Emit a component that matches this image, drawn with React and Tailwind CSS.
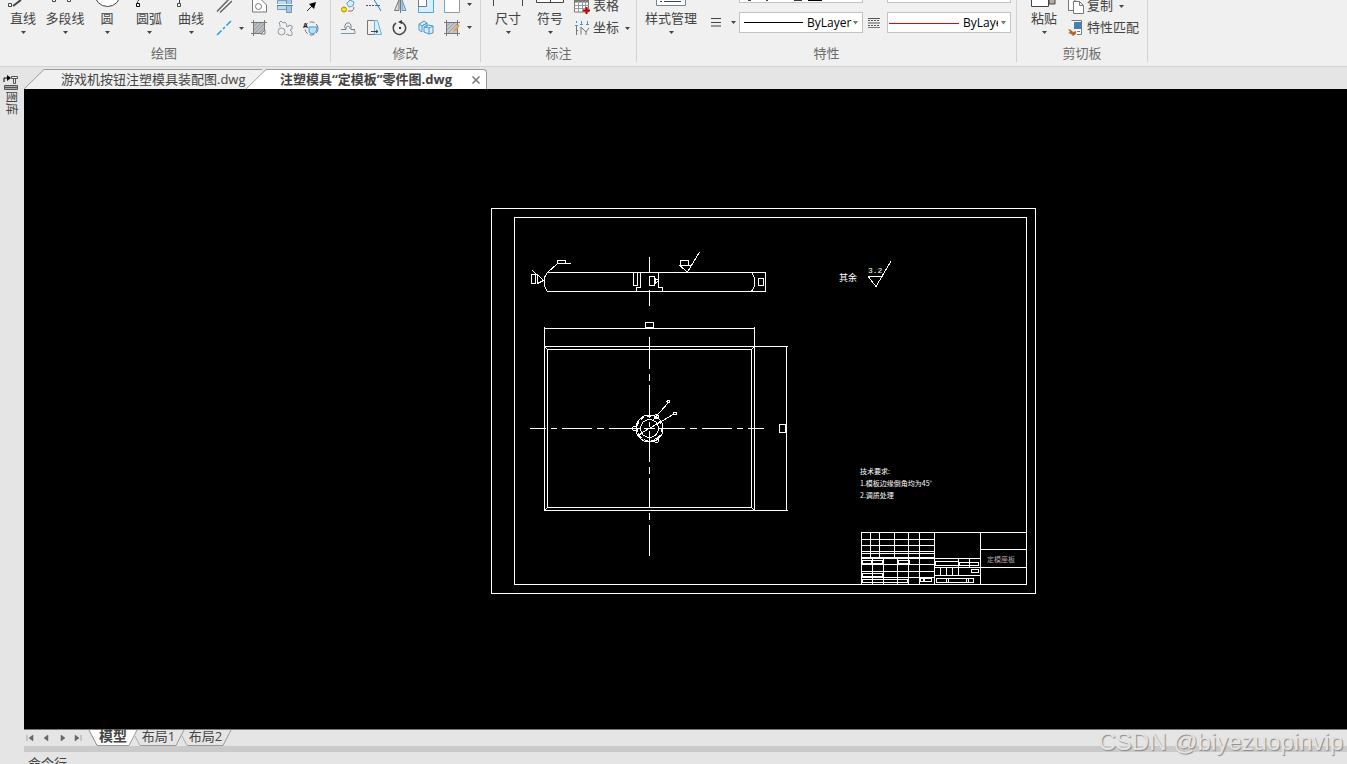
import { useState } from 'react'

const layoutTabs = ['模型', '布局1', '布局2']

function Caret({ className = 'text-[#444]' }) {
  return (
    <svg viewBox="0 0 5 3" className={`h-[3px] w-[5px] shrink-0 ${className}`} aria-hidden="true">
      <path d="M0 0h5L2.500 3z" fill="currentColor" />
    </svg>
  )
}

function Group({ title, className, children }) {
  return (
    <section className={`flex h-[62px] shrink-0 flex-col justify-end border-r border-[#d2d2d2] ${className}`}>
      <div className="flex h-9 items-end">{children}</div>
      <h2 className="mt-2 text-center text-[13px] leading-[18px] text-[#6a6a6a]">{title}</h2>
    </section>
  )
}

function BigButton({ label, wide, children }) {
  return (
    <button className={`flex shrink-0 flex-col items-center pb-0.5 ${wide ? 'w-[60px]' : 'w-[42px]'}`}>
      <svg viewBox="0 0 32 10" className="h-2.5 w-8" fill="none" stroke="#444" strokeWidth="1" aria-hidden="true">
        {children}
      </svg>
      <span className="mb-[5px] whitespace-nowrap text-[13px] leading-4 text-[#444]">{label}</span>
      <Caret />
    </button>
  )
}

function Icon({ children }) {
  return (
    <svg viewBox="0 0 16 16" className="size-4 shrink-0" fill="none" stroke="#777" strokeWidth="1" aria-hidden="true">
      {children}
    </svg>
  )
}

function Tool({ title, children }) {
  return (
    <button title={title} aria-label={title} className="flex w-[26px] justify-center">
      <Icon>{children}</Icon>
    </button>
  )
}

function TextTool({ label, caret, children }) {
  return (
    <button className="flex h-4 items-center text-[13px] leading-4 text-[#444]">
      <Icon>{children}</Icon>
      <span className="ml-[3px] whitespace-nowrap pb-0.5">{label}</span>
      {caret && <span className="ml-1.5"><Caret /></span>}
    </button>
  )
}

function Combo({ label, pad, children }) {
  return (
    <div className="relative h-[21px] w-[124px]">
      <select
        aria-label={label}
        className={`block h-[21px] w-full appearance-none border border-[#c3c3c3] bg-white text-[12px] leading-4 text-black ${pad}`}
      >
        <option>ByLayer</option>
        <option>ByBlock</option>
      </select>
      <svg viewBox="0 0 124 21" className="pointer-events-none absolute inset-0" aria-hidden="true">
        <path d="M114 9h5l-2.500 3.500z" fill="#777" />
        {children}
      </svg>
    </div>
  )
}

function DrawGroup() {
  return (
    <Group title="绘图" className="w-[331px] pl-0.5 pr-1">
      <div className="flex">
        <BigButton label="直线">
          <path d="M6 6 14 0" strokeWidth="2" />
          <path d="M1.500 3.500h3v3h-3z" fill="#fff" />
        </BigButton>
        <BigButton label="多段线">
          <path d="M3.500-1.500h3v3h-3zM18.500-1.500h3v3h-3z" fill="#fff" />
        </BigButton>
        <BigButton label="圆">
          <circle cx="16.500" cy="-6.500" r="13" fill="#fff" />
        </BigButton>
        <BigButton label="圆弧">
          <path d="M4.500 3Q4 1 6 0" />
          <path d="M3.500 3.500h3v3h-3z" fill="#fff" stroke="#000" />
        </BigButton>
        <BigButton label="曲线">
          <path d="M4.500 3V0" />
          <path d="M2.500 3.500h3v3h-3z" fill="#fff" />
        </BigButton>
      </div>
      <div className="ml-1 flex w-[30px] flex-col gap-[7px]">
        <button title="双线" aria-label="双线" className="w-4">
          <Icon><path d="M1 14.500 14 1M4 15.500 16 4" stroke="#666" strokeWidth="1.500" /></Icon>
        </button>
        <button title="构造线" aria-label="构造线" className="flex w-7 items-center justify-between">
          <Icon><path d="M1 15 5.500 10.500M7 9l2-2M10.500 5.500 15 1" stroke="#22a0dc" strokeWidth="1.500" /></Icon>
          <Caret />
        </button>
      </div>
      <div className="grid grid-cols-3 gap-y-[7px]">
        <Tool title="面域">
          <path d="M1.500 1v14h14V8L10 2.500" fill="#fff" />
          <circle cx="7.500" cy="9.500" r="3" />
        </Tool>
        <Tool title="轴">
          <path d="M.500 3.500h9v9h-9z" fill="#bcdcf4" stroke="#7b9cb8" />
          <path d="M9.500 1.500h5v14h-5z" fill="#9fc8ea" stroke="#8090a8" />
          <path d="M0 7.500h16" stroke="#fff" />
          <path d="M0 8.500h16" stroke="#4386bf" />
        </Tool>
        <Tool title="箭头">
          <path d="M4 14 9 9" stroke="#222" />
          <path d="m13 5-2 7-5-5z" fill="#000" stroke="none" />
        </Tool>
        <Tool title="填充">
          <path d="M2.500 2.500h11v11h-11z" fill="#b9bdc1" stroke="#75787b" />
          <path d="M0 2.500h16M2.500 0v16M0 13.500h10M13.500 0v10" stroke="#777" />
          <path d="M3 6l3-3M3 10l7-7M4 13l9-9M8 13l5-5" stroke="#999da1" />
          <path d="m10 14 4-4v4z" fill="#fff" />
        </Tool>
        <Tool title="零件">
          <path d="M3 7V5L2 3l2-2 2 2 2-1 2 3-1 1 2 1 1-2 3 1v3l-2 1 2 2v3l-3 1-1-2-2 1" stroke="#8b98a4" />
          <circle cx="4.500" cy="11.500" r="3.500" stroke="#8b98a4" />
        </Tool>
        <Tool title="局部放大">
          <circle cx="8.500" cy="8.500" r="6.500" stroke="#778" strokeDasharray="5 2" />
          <path d="M6 7h8q0 6-5 7-3-1-3-3z" fill="#b7e1f8" stroke="#3e9bd0" />
          <text x="0" y="8" fontSize="7" fontWeight="700" fill="#222" stroke="none">A</text>
        </Tool>
      </div>
    </Group>
  )
}

function ModifyGroup() {
  return (
    <Group title="修改" className="w-[150px]">
      <div className="ml-1 grid grid-cols-5 gap-y-[7px]">
        <Tool title="复制">
          <circle cx="4" cy="12.500" r="2.500" fill="#ffe600" stroke="#aa8d00" />
          <path d="m7 6 3-3 4 2-1 4-4 1-2-3z" fill="#d5efff" stroke="#5aa0cf" />
          <path d="M8 14h4q2-1 2-4" stroke="#b56161" />
        </Tool>
        <Tool title="延伸">
          <path d="M0 8.500h10" stroke="#555" strokeDasharray="2 1" />
          <path d="m7 1 8 13M9 8.500h5" stroke="#247bb9" />
        </Tool>
        <Tool title="镜像">
          <path d="M7 3v10.500H2.500z" fill="#ddd" />
          <path d="M10 3v10.500h4z" fill="#a9d9f3" stroke="#6199bd" />
          <path d="M8.500 0v16" />
        </Tool>
        <Tool title="缩放">
          <path d="M.500 0v15.500h15V0z" fill="#d5f1fd" stroke="#50a6d5" />
          <path d="M.500 0v9.500h8V0z" fill="#fff" stroke="#707a85" />
        </Tool>
        <Tool title="阵列">
          <path d="M.500 0v15.500h15V0z" fill="#fff" stroke="#999" />
          <path d="M.500 0v15.500" stroke="#56b6ea" strokeDasharray="3 2" />
        </Tool>
        <Tool title="偏移">
          <path d="M1 9.500h5q-3-3 0-6 4-2 5 2v4h4" stroke="#737e89" />
          <path d="M1 13.500h14q1-3-2-4M6 9q0-3 2-3t2 3" stroke="#7c95a5" />
        </Tool>
        <Tool title="拉伸">
          <path d="M1.500.500h7v14h-7z" stroke="#777" />
          <path d="M8.500.500h3l4 14h-7z" fill="#d5f0fc" stroke="#70aed2" />
          <path d="M5 11.500h7l-2-1.500m2 1.500L10 13" stroke="#444" />
        </Tool>
        <Tool title="旋转">
          <path d="M4 3A6.200 6.200 0 1 0 8 2" stroke="#444" strokeWidth="1.500" />
          <path d="m6 2 4-2v4z" fill="#333" stroke="none" />
          <path d="M7 7h2v2H7z" fill="#333" stroke="none" />
        </Tool>
        <Tool title="三维">
          <path d="m1 4 5-3 3 2-5 3zM1 4v6l3 2V6M4 6l5-3v4M6 7l4-2 5 1v7l-4 1-5-2zM6 7l5 1 4-2M11 8v6" fill="#d2edfb" stroke="#4e9ac8" />
        </Tool>
        <Tool title="编辑填充">
          <path d="M2.500 2.500h11v11h-11z" fill="#c3c7cb" stroke="#777" />
          <path d="M0 2.500h16M2.500 0v16M13.500 0v16M0 13.500h16" stroke="#777" />
          <path d="M3 6l3-3M3 10l7-7M4 13l9-9" stroke="#999da1" />
          <path d="m10 11 5-6" stroke="#e9a13b" strokeWidth="2" />
        </Tool>
      </div>
      <div className="flex flex-col gap-5 pb-[7px] pl-0.5">
        <Caret />
        <Caret />
      </div>
    </Group>
  )
}

function AnnotateGroup() {
  return (
    <Group title="标注" className="w-[156px]">
      <div className="ml-1.5 flex">
        <BigButton label="尺寸">
          <path d="M1.500 0v6M30.500 0v6" />
        </BigButton>
        <BigButton label="符号">
          <path d="M2.500-2v4.500h27V-2M16.500-2v4.500" fill="#fff" />
        </BigButton>
      </div>
      <div className="ml-[3px] flex flex-col gap-1.5">
        <TextTool label="表格">
          <path d="M.500 0h14v14H.500z" fill="#fff" />
          <path d="M1 3h13" strokeWidth="3" />
          <path d="M.500 7.500h14M.500 10.500h14M4.500 3v11M8.500 3v11M11.500 3v11" stroke="#999" />
          <path d="M12.500 9v7M9 12.500h7" stroke="#c00000" strokeWidth="2" />
        </TextTool>
        <TextTool label="坐标" caret>
          <path d="M2.500 6v9M2 10.500h2M7 14.500V7l5 5 3-4M12 12v3" stroke="#777" />
          <path d="M2.500 1v2M7.500 1v3M13.500 1v3M6 4.500h3M12 4.500h3M1 5.500h3" stroke="#4b93d2" />
        </TextTool>
      </div>
    </Group>
  )
}

function PropertyGroup() {
  return (
    <Group title="特性" className="w-[380px]">
      <div className="ml-1">
        <BigButton label="样式管理" wide>
          <path d="M1.500-2v7.500h29V-2z" fill="#fff" stroke="#6d8798" />
          <path d="M5 1.500h2M9 1.500h17" />
        </BigButton>
      </div>
      <button title="线宽" aria-label="线宽" className="mb-[9px] ml-2.5 flex w-[25px] items-center justify-between">
        <svg viewBox="0 0 10 9" className="h-[9px] w-2.5" aria-hidden="true">
          <path d="M0 .500h10M0 4.500h10M0 8h10" stroke="#444" />
        </svg>
        <Caret />
      </button>
      <div className="mb-[3px] ml-[3px] flex flex-col gap-[9px]">
        <Combo label="颜色" pad="pl-[67px]">
          <path d="M9 18.500h3M27 18.500h2" stroke="#444" />
          <path d="M55 18.500h8" stroke="#334" />
          <path d="M69 18.500h14" stroke="#000" />
        </Combo>
        <Combo label="线宽" pad="pl-[67px]">
          <path d="M5 10.500h59" stroke="#000" />
        </Combo>
      </div>
      <svg viewBox="0 0 12 10" className="mb-2 ml-[5px] mr-[7px] h-2.5 w-3" aria-hidden="true">
        <path d="M0 .500h12M0 5h12" stroke="#555" />
        <path d="M0 2.500h12M0 7.500h12" stroke="#555" strokeDasharray="2 1" />
        <path d="M0 9.500h12" stroke="#777" />
      </svg>
      <div className="mb-[3px] flex flex-col gap-[9px]">
        <Combo label="图层" pad="pl-[75px] pr-3" />
        <Combo label="线型" pad="pl-[75px] pr-3">
          <path d="M2 11.500h70" stroke="#f00000" />
        </Combo>
      </div>
    </Group>
  )
}

function ClipboardGroup() {
  return (
    <Group title="剪切板" className="w-[131px]">
      <div className="ml-1.5">
        <BigButton label="粘贴">
          <path d="M3.500-2v8.500h17V-2z" fill="#fff" />
          <path d="M21-2h6v6h-6z" fill="#b9aba0" />
        </BigButton>
      </div>
      <div className="ml-[3px] flex flex-col gap-1.5">
        <TextTool label="复制" caret>
          <path d="M.500 0v12.500h5V3.500l4-3" fill="#fff" />
          <path d="M5.500 3.500h6l4 4v8h-10zM11.500 3.500v4h4" fill="#fff" />
        </TextTool>
        <TextTool label="特性匹配">
          <path d="M3.500.500h10v14H9" fill="#fff" />
          <path d="M6 2h7v7H6z" fill="#4281b5" stroke="none" />
          <path d="m0 9 3 1 2 2 3-1v3l-3 2-2-2-3-1 2-1z" fill="#b16a31" stroke="none" />
          <path d="M9 11.500h3" />
        </TextTool>
      </div>
    </Group>
  )
}

function FileTabs() {
  return (
    <nav className="flex h-[22px] items-end text-[13px] leading-4 text-[#444]">
      <svg viewBox="0 0 20 20" className="size-5 shrink-0" aria-hidden="true">
        <path d="M0 20 20 .500V20z" fill="#f0f0f0" />
        <path d="M0 20 20 .500" stroke="#999" />
      </svg>
      <button className="h-5 w-[218px] shrink-0 whitespace-nowrap border-t border-[#999] bg-[#f0f0f0] pb-0.5 pl-[17px] text-left">
        游戏机按钮注塑模具装配图.dwg
      </button>
      <svg viewBox="0 0 20 20" className="z-10 -ml-4 size-5 shrink-0" aria-hidden="true">
        <path d="M0 20 20 .500V20z" fill="#fff" />
        <path d="M0 20 20 .500" stroke="#999" />
      </svg>
      <div className="flex h-5 w-[221px] shrink-0 items-center rounded-tr-sm border-r border-t border-[#999] bg-white">
        <button className="flex-1 whitespace-nowrap pb-0.5 pl-3.5 text-left font-bold">注塑模具“定模板”零件图.dwg</button>
        <button aria-label="关闭" className="mr-1.5">
          <svg viewBox="0 0 8 8" className="size-2" aria-hidden="true">
            <path d="m.500.500 7 7m0-7-7 7" stroke="#777" strokeWidth="1.500" />
          </svg>
        </button>
      </div>
    </nav>
  )
}

function Sheet() {
  return (
    <svg
      viewBox="24 89 1323 640"
      className="h-full w-full font-['Noto_Sans_CJK_SC',sans-serif]"
      fill="none"
      stroke="#fff"
      shapeRendering="crispEdges"
    >
      {/* frame */}
      <path d="M491.500 208.500h544v385h-544zM514.500 217.500h512v367h-512z" />

      {/* side view */}
      <path d="M547 272.500h219M547 291.500h219M544.500 277v10M754.500 277v10M765.500 272v20" />
      <path d="m544.500 277.500 3-5M544.500 286.500l3 5M751.500 272.500l3 5M754.500 286.500l-3 5" />
      <path d="M649.500 257v16M649.500 290v16M758.500 278.500h5v7h-5z" />
      <path d="M633.500 272.500h4v13h-4zM640.500 272v15.500h-4v4M658.500 272v15.500h4v4" />
      <path d="M649.500 276.500h5v9h-5zM655.500 278.500l3 2-3 3z" />
      <path d="M531.500 274.500h4v9h-4zM532 270l5 5M537.500 274.500v9l6-3z" />
      <path d="m547.500 272.500 10-9M557.500 260.500h8v3h-8zM557 263.500h14" />
      <path d="M680.500 260.500h8v5h-8zM679 265.500h13M680 265.500l7 6.500M687.500 272l12-20" />

      {/* plan view */}
      <path d="M544.500 328.500h210M544.500 327v184M754.500 327v184M544 346.500h244M544 510.500h244" />
      <path d="M547.500 349.500h204v158h-204zM544.500 346.500l3 3M754.500 346.500l-3 3M544.500 510.500l3-3M754.500 510.500l-3-3" />
      <path d="M645.500 322.500h8v5h-8zM786.500 346v165M779.500 424.500h6v8h-6z" />
      <path d="M649.500 337v32M649.500 374v7M649.500 385v33M649.500 422v5M649.500 431v31M649.500 467v7M649.500 478v29M649.500 513v7M649.500 525v31" />
      <path d="M530 428.500h16M551 428.500h6M562 428.500h30M597 428.500h7M609 428.500h31M644 428.500h11M659 428.500h26M690 428.500h7M702 428.500h30M737 428.500h6M748 428.500h16" />
      <circle cx="649.500" cy="428.500" r="13.500" />
      <circle cx="649.500" cy="428.500" r="12.500" strokeDasharray="4 3" />
      <circle cx="649.500" cy="428.500" r="9" />
      <circle cx="634.500" cy="428.500" r="2" />
      <circle cx="656.500" cy="416.500" r="2" />
      <circle cx="656.500" cy="440.500" r="2" />
      <circle cx="668.500" cy="401.500" r="1.500" />
      <circle cx="675" cy="413.500" r="1.500" />
      <path d="m652 421 16-18M638 435l36-21M636.500 434.500h4M638.500 433v3" />

      {/* surface finish note */}
      <path d="M868 276.500h15M868.500 277l7.500 9.500L891 261" />
      <g fill="#fff" stroke="none">
        <text x="839" y="281" fontSize="9">其余</text>
        <text x="868" y="273" fontSize="8" className="font-['Liberation_Mono',monospace]">3.2</text>
        <text x="860" y="474" fontSize="7">技术要求:</text>
        <text x="860" y="486" fontSize="7">1.模板边缘倒角均为45°</text>
        <text x="860" y="498" fontSize="7">2.调质处理</text>
        <text x="987" y="562" fontSize="7" fill="#b8a8a8">定模座板</text>
      </g>

      {/* title block */}
      <path d="M861.500 584V532.500H1026M934.500 532v52M980.500 532v52M980 549.500h46M980 567.500h46M919.500 532v52" />
      <path d="M870.500 532v25M879.500 532v25M894.500 532v25M908.500 532v25" />
      <path d="M861 539.500h73M861 545.500h73M861 551.500h73M861 553.500h73M861 557.500h73M861 558.500h73" />
      <path d="M861 564.500h73M861 571.500h73M861 577.500h73M872.500 558v26M883.500 558v26M897.500 558v26M908.500 558v26" />
      <path d="M862.500 560.500h9v3h-9zM872.500 560.500h10v3h-10zM898.500 560.500h11v3h-11zM862.500 573.500h20v3h-20zM862.500 579.500h45v3h-45z" />
      <path d="M920.500 578.500h3v3h-3zM924.500 578.500h7v3h-7z" />
      <path d="M934 558.500h46M934 567.500h46M934 575.500h46M958.500 558v17M969.500 558v9M940.500 567v8M946.500 567v8M952.500 567v8" />
      <path d="M935.500 561.500h23v4h-23zM959.500 562.500h19v3h-19zM971.500 569.500h7v3h-7zM936.500 578.500h37v4h-37zM946.500 578v4M948.500 578v4M966.500 578v4M968.500 578v4" />
    </svg>
  )
}

function LayoutBar() {
  const [active, setActive] = useState('模型')

  return (
    <nav className="flex h-[17px] shrink-0 border-t border-[#777] text-[13px] leading-3 text-[#444]">
      {[
        ['首页', 'M3 3v6M9 3v6L5 6z'],
        ['上一页', 'M8 3v6L4 6z'],
        ['下一页', 'M5 3v6l4-3z'],
        ['末页', 'M3 3v6l4-3zM9 3v6'],
      ].map(([name, d]) => (
        <button key={name} aria-label={name} className="flex w-4 items-center">
          <svg viewBox="0 0 12 12" className="size-3" aria-hidden="true">
            <path d={d} fill="#666" stroke="#666" strokeWidth=".500" />
          </svg>
        </button>
      ))}
      <svg viewBox="0 0 9 16" className="h-4 w-[9px] shrink-0" aria-hidden="true">
        <path d="M1 0h8v16z" fill="#fff" />
        <path d="m1 0 8 15.500" stroke="#888" />
      </svg>
      {layoutTabs.map((name, i) => (
        <div key={name} className="flex">
          <button
            onClick={() => setActive(name)}
            className={`flex h-4 items-center justify-center whitespace-nowrap border-b border-[#999] pb-[3px] ${
              i === 0 ? 'w-8' : 'w-[35px]'
            } ${active === name ? 'bg-white text-[14px] font-bold' : ''}`}
          >
            {name}
          </button>
          <svg viewBox="0 0 12 16" className="h-4 w-3 shrink-0" fill="none" aria-hidden="true">
            {active === name && <path d="M0 0h8L0 16z" fill="#fff" />}
            <path d="M8 0 0 15.500" stroke="#999" />
            {i < 2 && <path d="m6 6 5 9.500h1" stroke="#aaa" />}
          </svg>
        </div>
      ))}
    </nav>
  )
}

export default function App() {
  return (
    <div className="relative flex h-screen flex-col overflow-hidden bg-[#e5e5e5] font-['Open_Sans','Noto_Sans_CJK_SC',sans-serif]">
      <header className="flex h-[67px] shrink-0 border-b border-[#d2d2d2] bg-[#f0f0f0]">
        <DrawGroup />
        <ModifyGroup />
        <AnnotateGroup />
        <PropertyGroup />
        <ClipboardGroup />
      </header>

      <div className="flex min-h-0 flex-1">
        <aside className="w-6 shrink-0 pr-0.5">
          <button className="flex w-full flex-col items-center pt-2 text-[12px] leading-4 text-[#444]">
            <svg viewBox="0 0 16 16" className="size-4" fill="none" stroke="#555" aria-hidden="true">
              <path d="M1 7V3h4" stroke="#000" />
              <path d="m4 0 4 3-4 3z" fill="#000" stroke="none" />
              <path d="M8.500 1.500h6v2h-6zM10.500 4v4.500h2V4" fill="#eeeedd" />
              <path d="M1.500 10.500h13v4h-13zM1 12.500h14" fill="#aaa" />
            </svg>
            <span className="[text-orientation:sideways] [writing-mode:vertical-rl]">图库</span>
          </button>
        </aside>

        <div className="flex min-w-0 flex-1 flex-col">
          <FileTabs />
          <main className="min-h-0 flex-1 bg-black">
            <Sheet />
          </main>
          <LayoutBar />
          <div className="h-1.5 shrink-0 bg-[#cacaca]" />
          <div className="h-3 shrink-0 overflow-hidden pl-1 pt-0.5 text-[13px] leading-[18px] text-[#444]">命令行</div>
        </div>
      </div>

      <div className="pointer-events-none absolute bottom-1.5 right-1 whitespace-nowrap font-['Liberation_Sans',sans-serif] text-[24px] leading-8 text-[#e4e4e4] [text-shadow:1px_1px_1px_#888]">
        CSDN @biyezuopinvip
      </div>
    </div>
  )
}
